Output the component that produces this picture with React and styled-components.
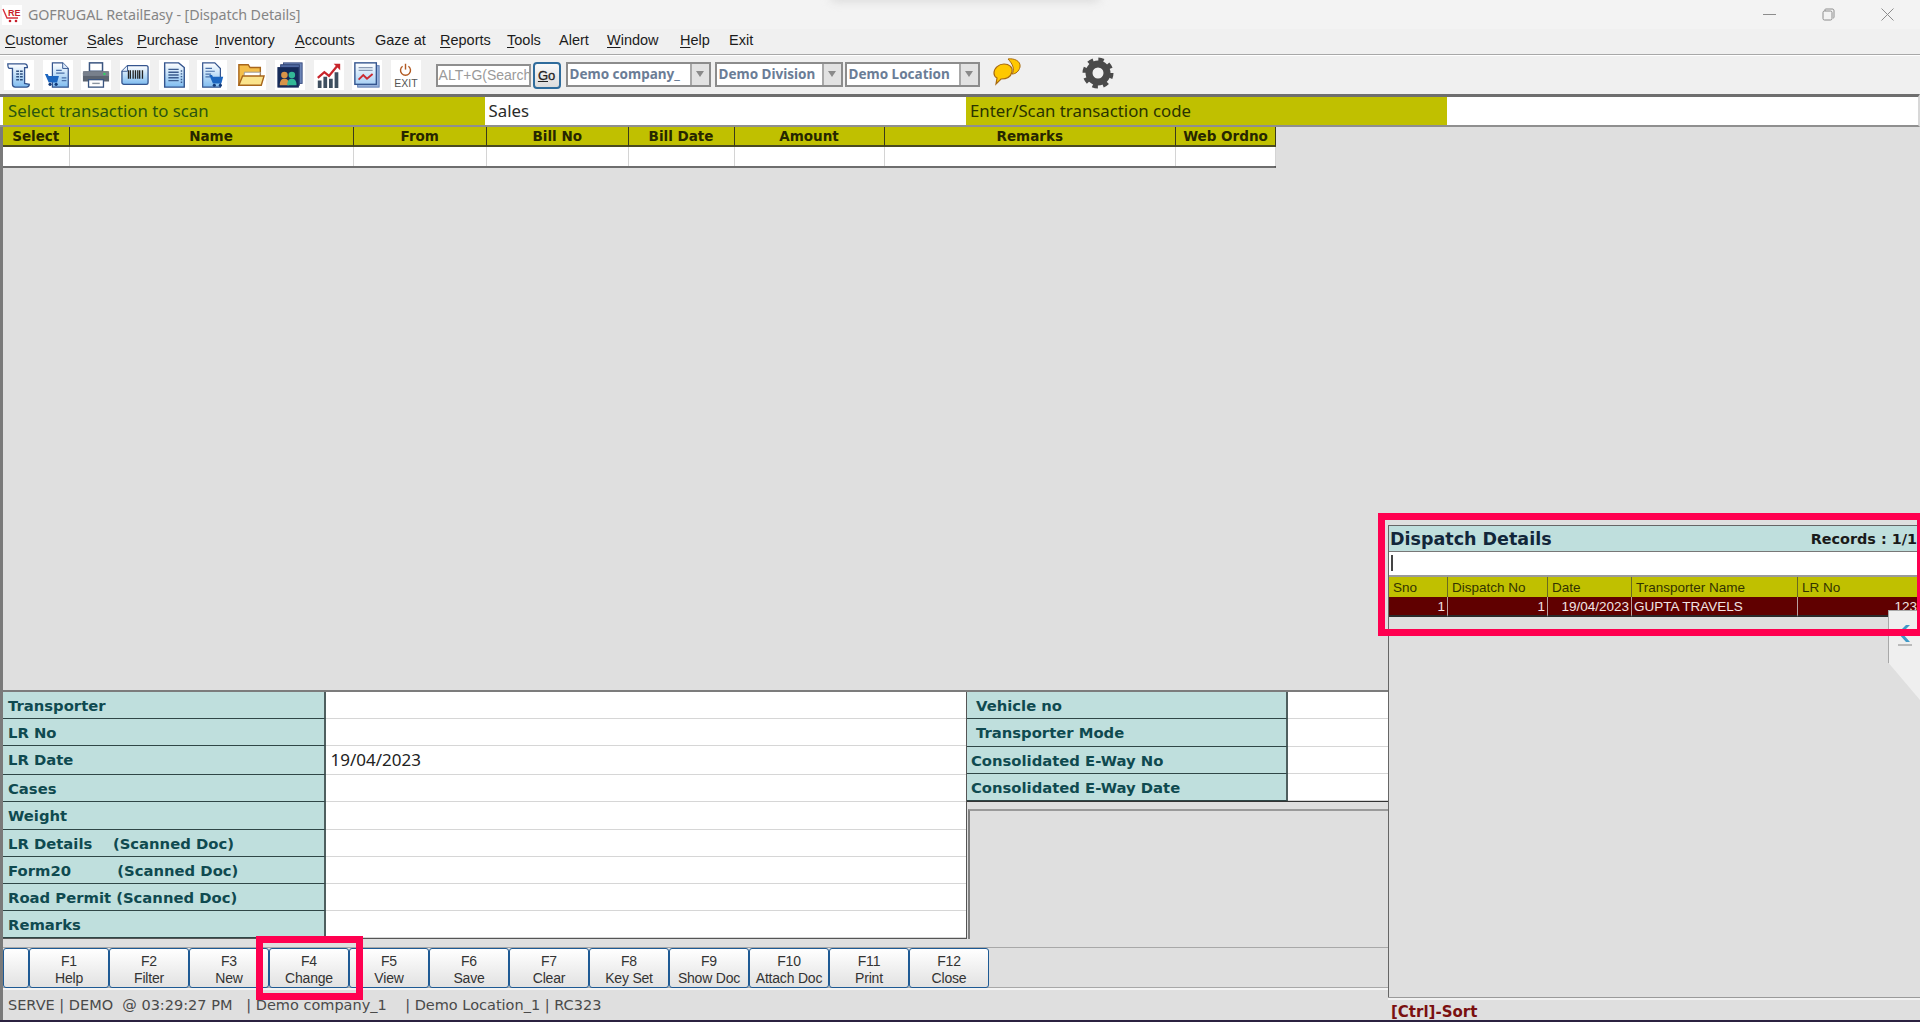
import React from "react";
import styled, { createGlobalStyle } from "styled-components";

const Global = createGlobalStyle`
  html, body { margin: 0; padding: 0; background: #dfdfdf; overflow: hidden; }
  * { box-sizing: border-box; }
`;
const SANS = `"Liberation Sans", Arial, sans-serif`;
const VERD = `"DejaVu Sans", Verdana, sans-serif`;
const TAHOMA = `"Noto Sans", "Open Sans", sans-serif`;
const OLIVE = "#c0c000";
const TEAL = "#bfdfdd";

const Page = styled.div`
  position: relative; width: 1920px; height: 1022px; overflow: hidden;
  display: flex; flex-direction: column; background: #dfdfdf; font-family: ${SANS};
`;
const TitleBar = styled.div`
  height: 29px; flex: none; background: #f3f3f3; display: flex; align-items: center; padding-left: 2px;
`;
const LogoBox = styled.div`
  width: 20px; height: 20px; background: #fff; display: flex; align-items: center; justify-content: center; margin-right: 6px;
`;
const TitleText = styled.span`
  font: 14.3px ${TAHOMA}; color: #858585; flex: 1; letter-spacing: -0.1px;
`;
const WinButtons = styled.div`
  display: flex; gap: 46px; padding-right: 26px; align-items: center;
`;
const Shadow = styled.div`
  position: absolute; left: 830px; top: -8px; width: 270px; height: 10px; background: #dcdcdc; filter: blur(4px); border-radius: 8px;
`;
const MenuBar = styled.div`
  height: 26px; flex: none; background: #f0f0f0; display: flex; align-items: center; gap: 17px; padding: 0 0 3px 5px;
  border-bottom: 1px solid #a8a8a8; box-shadow: 0 1px 0 #fff; position: relative;
  font: 14.5px ${SANS}; color: #1c1c1c;
`;
const MenuItem = styled.span`
  width: ${p => p.$w}px; flex: none; white-space: nowrap;
  u { text-decoration-thickness: 1px; text-underline-offset: 2px; }
`;
const Toolbar = styled.div`
  height: 38px; flex: none; background: #f0f0f0; display: flex; align-items: center; padding: 0 0 0 4px; margin-top: 1px;
`;
const Tile = styled.div`
  width: 30px; height: 30px; background: #fff; margin-right: 8.7px; flex: none; position: relative;
  display: flex; flex-direction: column; align-items: center; justify-content: center;
`;
const ExitLabel = styled.span`
  font: 10.5px ${SANS}; color: #555; line-height: 10px;
`;
const SearchInput = styled.div`
  width: 95px; height: 23px; flex: none; margin-left: 6px; background: #fff; border: 2px solid #8e8e8e; border-right-color: #999;
  font: 14px/19px ${SANS}; color: #9a9a9a; overflow: hidden; white-space: nowrap; padding-left: 1px;
`;
const GoButton = styled.div`
  width: 28px; height: 27px; flex: none; margin-left: 2px; border: 2px solid #2f6c9c; border-radius: 4px;
  background: linear-gradient(#fafafa, #dcdcdc); text-align: center; font: 13px/23px ${SANS}; color: #222;
  -webkit-text-stroke: 0.3px #222;
`;
const Combo = styled.div`
  width: ${p => p.$w}px; height: 25px; flex: none; margin-left: ${p => p.$ml}px; margin-top: -2px; background: #fff; border: 2px solid #8c8c8c;
  display: flex; overflow: hidden;
`;
const ComboText = styled.span`
  flex: 1; min-width: 0; white-space: nowrap; padding-left: 2px; font: bold 13.5px/21px ${TAHOMA}; color: #6b7d96;
`;
const ComboArrow = styled.span`
  width: 19px; flex: none; background: #e2e2e2; border-left: 2px solid #a8a8a8; display: flex; align-items: center; justify-content: center;
  &::after { content: ""; border: 4px solid transparent; border-top: 6px solid #8a8a8a; border-bottom: 0; }
`;
const ChatWrap = styled.div`
  width: 32px; height: 28px; margin-left: 12px; margin-top: -6px; flex: none;
`;
const GearWrap = styled.div`
  width: 32px; height: 32px; margin-left: 58px; margin-top: -4px; flex: none;
`;
const ScanRow = styled.div`
  height: 33px; flex: none; display: grid; grid-template-columns: 481.5px 481.5px 481px 1fr;
  border-top: 3px solid #6e6e6e; border-bottom: 2px solid #8f8f8f; border-right: 2px solid #d8d8d8; padding-left: 3px;
  background: #fff;
`;
const ScanLabel = styled.div`
  background: ${OLIVE}; font: 16.8px/27px ${TAHOMA}; color: ${p => p.$c}; padding-left: ${p => p.$pl}px; white-space: nowrap;
`;
const ScanValue = styled.div`
  background: #fff; font: 16.8px/27px ${TAHOMA}; color: #2a2a2a; padding-left: 4px;
`;
const Columns = styled.div`
  flex: 1; min-height: 0; display: flex;
`;
const LeftCol = styled.div`
  width: 1388px; flex: none; display: flex; flex-direction: column; border-left: 3px solid #7a7a7a;
`;
const Grid = styled.div`
  width: 1273px; flex: none; display: grid; grid-template-columns: 66.5px 284px 133.5px 141.5px 106px 150px 291.5px 100px; border-right: 2px solid #555; border-bottom: 2px solid #6e6e6e;
`;
const GridHead = styled.div`
  height: 20px; background: ${OLIVE}; border-right: 1px solid #3a3a1a; border-bottom: 2px solid #4a4a20;
  text-align: center; font: bold 13.5px/18px ${VERD}; color: #262600; white-space: nowrap; overflow: hidden;
  &:last-of-type { border-right: 0; }
`;
const GridCell = styled.div`
  height: 19px; background: #fff; border-right: 1px solid #d4d4d4;
`;
const Filler = styled.div`
  flex: 1;
`;
const FormArea = styled.div`
  height: 249px; flex: none; display: flex; border-top: 2px solid #7c7c7c;
`;
const MainForm = styled.div`
  width: 964px; flex: none; display: grid; grid-template-columns: 322.5px 1fr; grid-template-rows: repeat(9, 1fr);
  border-bottom: 1px solid #555; border-right: 1px solid #555;
`;
const FormLabel = styled.div`
  background: ${TEAL}; border-right: 2px solid #4f5f5f; border-bottom: 1.5px solid #2f4646; padding-left: ${p => p.$pl ?? 5}px;
  font: bold 14.8px/28px ${VERD}; color: #0f4a50; white-space: pre; overflow: hidden;
`;
const FormValue = styled.div`
  background: #fff; border-bottom: 1.5px solid #d6d6d6; padding-left: 5px; font: 17px/28px ${TAHOMA}; color: #222;
`;
const SideArea = styled.div`
  flex: 1; display: flex; flex-direction: column; min-width: 0;
`;
const SideForm = styled.div`
  height: 110px; flex: none; display: grid; grid-template-columns: 320.5px 1fr; grid-template-rows: repeat(4, 1fr); border-bottom: 1px solid #333;
`;
const SidePanel = styled.div`
  flex: 1; margin-top: 7px; border-top: 2px solid #9a9a9a; border-left: 2px solid #808080; margin-left: 1px; background: #dfdfdf;
`;
const FnBar = styled.div`
  height: 41px; flex: none; margin-top: 8px; display: flex; border-top: 1px solid #a8a8a8; border-bottom: 1px solid #a8a8a8; box-shadow: 0 2px 0 #f4f4f4;
`;
const FnKey = styled.div`
  width: ${p => p.$w || 80}px; flex: none; height: 40px; border: 1px solid #1e5a94; border-radius: 3px;
  background: linear-gradient(#ffffff, #e2e2e2); text-align: center; font: 14px/16.5px ${SANS}; letter-spacing: -0.2px; color: #333; padding-top: 4px; white-space: nowrap;
`;
const StatusBar = styled.div`
  height: 29px; flex: none; margin-top: 3px; display: flex; align-items: center; padding: 0 0 1px 5px; font: 14.5px ${VERD}; color: #4a4a4a; white-space: pre;
`;
const BottomEdge = styled.div`
  height: 2px; flex: none; background: #2b2140;
`;
const RightCol = styled.div`
  flex: 1; min-width: 0; padding-top: 398px; display: flex; flex-direction: column; overflow: hidden;
`;
const DispatchPanel = styled.div`
  flex: 1; display: flex; flex-direction: column; border-left: 1px solid #666;
`;
const DispatchTitle = styled.div`
  height: 27px; flex: none; background: ${TEAL}; border-top: 1px solid #666; border-bottom: 1px solid #777; display: flex; align-items: center; justify-content: space-between; padding-left: 1px;
`;
const DispatchName = styled.span`
  font: bold 17.5px ${VERD}; color: #12263a; white-space: nowrap;
`;
const Records = styled.span`
  font: bold 14.4px ${VERD}; color: #1a1a1a; white-space: nowrap; margin-right: 3px;
`;
const DispatchSearch = styled.div`
  height: 25px; flex: none; background: #fff; border-bottom: 2px solid #9a9a9a; padding: 3px 0 0 2px;
  &::before { content: ""; display: block; width: 1.5px; height: 16px; background: #444; }
`;
const DGrid = styled.div`
  display: grid; flex: none; grid-template-columns: 59px 100px 84px 166px 1fr; overflow: hidden;
`;
const DHead = styled.div`
  height: 20px; background: ${OLIVE}; border-right: 1px solid #6a6a20; padding-left: 4px; font: 13.5px/22px ${SANS}; color: #333300; white-space: nowrap;
`;
const DCell = styled.div`
  height: 20px; background: #600000; border-right: 1px solid #b8a0a0; border-bottom: 2px solid #2a2a2a; color: #f2e4e4; padding: 0 2px; font: 13.5px/19px ${SANS};
  text-align: ${p => p.$r ? "right" : "left"}; white-space: nowrap;
`;
const CtrlSort = styled.div`
  height: 23px; flex: none; border-top: 1px solid #9a9a9a; box-shadow: inset 0 2px 0 #f2f2f2; padding: 5px 0 0 3px; font: bold 15px/18px ${VERD}; color: #7a1010;
`;
const PinkBox = styled.div`
  position: absolute; border: 7px solid #ff0050; pointer-events: none;
  left: ${p => p.$l}px; top: ${p => p.$t}px; width: ${p => p.$w}px; height: ${p => p.$h}px;
`;
const FlyTab = styled.div`
  position: absolute; left: 1888px; top: 610px; width: 32px; height: 90px; background: #efefef;
  clip-path: polygon(0 0, 100% 0, 100% 100%, 0 58%);
  border-left: 1px solid #a8a8a8; border-top: 1px solid #a8a8a8;
`;
const Chevron = styled.svg`
  display: block; margin: 12px 0 0 9px;
`;

const S = ({ children, w = 28, h = 28, vb = "0 0 30 30" }) => (
  <svg width={w} height={h} viewBox={vb} aria-hidden="true">{children}</svg>
);
const Grad = ({ id, a = "#ffffff", b = "#7fbcf0" }) => (
  <defs><linearGradient id={id} x1="0" y1="0" x2="0" y2="1"><stop offset="0" stopColor={a} /><stop offset="1" stopColor={b} /></linearGradient></defs>
);
const Cart = ({ x = 0, y = 0 }) => (
  <g transform={`translate(${x} ${y})`}>
    <path d="M0 0h3l1 2h11l-2 7H4z" fill="#1c66c0" />
    <circle cx="5.5" cy="11" r="1.7" fill="#123a7a" /><circle cx="12" cy="11" r="1.7" fill="#123a7a" />
  </g>
);
const I = {
  Ledger: () => (<S><Grad id="g1" /><path d="M3 3h18c2 0 3 2 3 4h-3v17l5 1c0 2-1 3-3 3H11c-2 0-3-1-3-3V8H5C3 8 3 5 3 3z" fill="url(#g1)" stroke="#34558f" strokeWidth="1.4" /><path d="M12 11h7M12 14h7M12 17h7M12 20h7" stroke="#30507f" strokeWidth="1.6" strokeDasharray="3 1" /></S>),
  DocCart: () => (<S><Grad id="g2" /><path d="M9 2h11l6 6v20H9z" fill="url(#g2)" stroke="#34558f" strokeWidth="1.3" /><path d="M20 2v6h6" fill="#dbeafa" stroke="#34558f" /><path d="M13 10h6M13 13h9M19 18h5M19 21h5" stroke="#4a70a8" strokeWidth="1.3" /><Cart x="1" y="14" /></S>),
  Printer: () => (<S><rect x="8" y="2" width="14" height="9" fill="#fff" stroke="#3a5580" strokeWidth="1.6" /><path d="M3 11h24c1 0 2 1 2 2v9H1v-9c0-1 1-2 2-2z" fill="#5c6470" /><rect x="1" y="11" width="28" height="5" fill="#78808c" /><circle cx="24" cy="14" r="1.3" fill="#30d060" /><rect x="7" y="20" width="16" height="8" fill="#fff" stroke="#3a5580" strokeWidth="1.4" /><path d="M11 24h8" stroke="#8a94a0" strokeWidth="1.5" /></S>),
  Barcode: () => (<S><Grad id="g4" /><path d="M7 5h20c1 0 2 1 2 2v16c0 1-1 2-2 2H3c-1 0-2-1-2-2V11z" fill="url(#g4)" stroke="#34558f" strokeWidth="1.4" /><path d="M8 10v9M10 10v9M13 10v9M15.5 10v9M18 10v9M20 10v9M23 10v9" stroke="#222" strokeWidth="1.4" /><path d="M7 5v6H1" fill="#e8f2fc" stroke="#34558f" strokeWidth="1" /></S>),
  Doc: () => (<S><Grad id="g5" /><path d="M5 2h15l6 5v21H5z" fill="url(#g5)" stroke="#34558f" strokeWidth="1.5" /><path d="M9 9h11M9 12h11M9 15h11M9 18h11M9 21h11" stroke="#3d5d8f" strokeWidth="1.5" /><path d="M23 10v14" stroke="#3d5d8f" strokeWidth="1.6" strokeDasharray="1.5 1.5" /></S>),
  DocCart2: () => (<S><Grad id="g6" /><path d="M5 2h13l6 6v20H5z" fill="url(#g6)" stroke="#34558f" strokeWidth="1.3" /><path d="M8 8h7M8 11h10M8 14h6M8 17h5" stroke="#4a70a8" strokeWidth="1.3" /><Cart x="12" y="15" /></S>),
  Folder: () => (<S><path d="M2 4h10l2 3h11v19H2z" fill="#f4be4a" stroke="#a8661c" strokeWidth="1.5" /><path d="M8 12h17l-1 8H7z" fill="#fff" stroke="#9a9a9a" strokeWidth="1" /><path d="M6 16h23l-3 10H2z" fill="#fbe48c" stroke="#a8661c" strokeWidth="1.5" /></S>),
  People: () => (<S><rect x="8" y="2" width="20" height="22" fill="#6d86b8" stroke="#3a4d80" /><rect x="5" y="4" width="20" height="22" fill="#4f69a2" stroke="#2d4070" /><rect x="2" y="7" width="22" height="21" fill="#142a58" stroke="#1e3060" /><circle cx="9" cy="15" r="3.5" fill="#d89448" /><path d="M4 26c0-5 2-7 5-7s5 2 5 7z" fill="#d89448" /><circle cx="17" cy="15" r="3.5" fill="#33b896" /><path d="M12 26c0-5 2-7 5-7s5 2 5 7z" fill="#33b896" /></S>),
  Chart: () => (<S><path d="M3 21h4v8H3zM9 17h4v12H9zM15 19h4v10h-4zM21 12h4v17h-4z" fill="#3e4f60" /><path d="M3 18l7-6 5 4 9-11" fill="none" stroke="#c8252c" strokeWidth="2.4" /><path d="M20 3h7v7z" fill="#c8252c" /></S>),
  Report: () => (<S><rect x="5" y="5" width="23" height="23" fill="#9ab4dc" stroke="#5c7cb4" /><Grad id="g10" a="#ffffff" b="#a8d0f4" /><rect x="2" y="2" width="23" height="23" fill="url(#g10)" stroke="#34558f" strokeWidth="1.5" /><path d="M6 7h15M6 10h15" stroke="#8a9ab4" strokeWidth="1.3" /><path d="M6 20l5-5 4 4 6-5" fill="none" stroke="#cc2a30" strokeWidth="2" /></S>),
  Power: () => (<svg width="15" height="16" viewBox="0 0 18 18" aria-hidden="true"><path d="M5.5 4.5a6 6 0 1 0 7 0" fill="none" stroke="#b25a22" strokeWidth="1.7" /><path d="M9 1.5v7" stroke="#b25a22" strokeWidth="1.7" /></svg>),
};
const Chat = () => (
  <svg width="32" height="28" viewBox="0 0 32 28" aria-hidden="true">
    <path d="M16 1c6-1 13 2 12 8-1 4-4 7-8 7 3-4 1-10-4-15z" fill="#ffc800" stroke="#a86a10" strokeWidth="1" />
    <path d="M2 15c0-5 5-9 10-9s9 3 8 8c-1 4-5 7-11 7l-5 5 1-6c-2-1-3-3-3-5z" fill="#ffc800" stroke="#a86a10" strokeWidth="1.2" />
  </svg>
);
const Gear = () => (
  <svg width="32" height="32" viewBox="0 0 32 32" aria-hidden="true">
    <circle cx="16" cy="16" r="9" fill="none" stroke="#4a4a4a" strokeWidth="7" />
    <circle cx="16" cy="16" r="13" fill="none" stroke="#4a4a4a" strokeWidth="5" strokeDasharray="5.2 5" />
    <circle cx="16" cy="16" r="5" fill="#f0f0f0" />
  </svg>
);
const Logo = () => (
  <svg width="20" height="20" viewBox="0 0 20 20" aria-hidden="true">
    <text x="6" y="11" fontFamily={SANS} fontSize="9" fontWeight="bold" fill="#c81e2a">RE</text>
    <path d="M1 4l4 9h11" fill="none" stroke="#d8323c" strokeWidth="1.4" />
    <circle cx="8" cy="16" r="1.3" fill="#c81e2a" /><circle cx="14" cy="16" r="1.3" fill="#c81e2a" />
  </svg>
);

const menus = [
  ["C", "ustomer", 65], ["S", "ales", 33], ["P", "urchase", 61], ["I", "nventory", 63], ["A", "ccounts", 63],
  ["", "Gaze at", 48], ["R", "eports", 50], ["T", "ools", 35], ["", "Alert", 31], ["W", "indow", 56], ["H", "elp", 32], ["", "Exit", 24],
];
const toolIcons = [I.Ledger, I.DocCart, I.Printer, I.Barcode, I.Doc, I.DocCart2, I.Folder, I.People, I.Chart, I.Report];
const heads = ["Select", "Name", "From", "Bill No", "Bill Date", "Amount", "Remarks", "Web Ordno"];
const mainRows = [
  ["Transporter", ""], ["LR No", ""], ["LR Date", "19/04/2023"], ["Cases", ""], ["Weight", ""],
  ["LR Details    (Scanned Doc)", ""], ["Form20         (Scanned Doc)", ""], ["Road Permit (Scanned Doc)", ""], ["Remarks", ""],
];
const sideRows = [["Vehicle no", 9], ["Transporter Mode", 9], ["Consolidated E-Way No", 4], ["Consolidated E-Way Date", 4]];
const keys = [["F1", "Help"], ["F2", "Filter"], ["F3", "New"], ["F4", "Change"], ["F5", "View"], ["F6", "Save"], ["F7", "Clear"], ["F8", "Key Set"], ["F9", "Show Doc"], ["F10", "Attach Doc"], ["F11", "Print"], ["F12", "Close"]];

export default function App() {
  return (
    <Page>
      <Global />
      <TitleBar>
        <LogoBox><Logo /></LogoBox>
        <TitleText>GOFRUGAL RetailEasy - [Dispatch Details]</TitleText>
        <WinButtons>
          <svg width="13" height="13" viewBox="0 0 13 13" aria-hidden="true"><path d="M0 6.5h13" stroke="#8c8c8c" /></svg>
          <svg width="13" height="13" viewBox="0 0 13 13" aria-hidden="true"><rect x="1" y="3" width="9" height="9" rx="1.5" fill="none" stroke="#8c8c8c" /><path d="M3 3V1.5C3 1 3.5 1 4 1h6c1.5 0 2 .5 2 2v6c0 .5 0 1-1 1" fill="none" stroke="#8c8c8c" /></svg>
          <svg width="13" height="13" viewBox="0 0 13 13" aria-hidden="true"><path d="M.5.5l12 12M12.5.5l-12 12" stroke="#8c8c8c" /></svg>
        </WinButtons>
      </TitleBar>
      <Shadow />
      <MenuBar>
        {menus.map(([u, rest, w]) => (
          <MenuItem key={rest} $w={w}>{u ? <u>{u}</u> : null}{rest}</MenuItem>
        ))}
      </MenuBar>
      <Toolbar>
        {toolIcons.map((Ic, i) => <Tile key={i}><Ic /></Tile>)}
        <Tile><I.Power /><ExitLabel>EXIT</ExitLabel></Tile>
        <SearchInput>ALT+G(Search</SearchInput>
        <GoButton><u>G</u>o</GoButton>
        <Combo $w={145} $ml={5}><ComboText>Demo company_</ComboText><ComboArrow /></Combo>
        <Combo $w={128} $ml={4}><ComboText>Demo Division</ComboText><ComboArrow /></Combo>
        <Combo $w={135} $ml={2}><ComboText>Demo Location</ComboText><ComboArrow /></Combo>
        <ChatWrap><Chat /></ChatWrap>
        <GearWrap><Gear /></GearWrap>
      </Toolbar>
      <ScanRow>
        <ScanLabel $c="#2a5510" $pl={5}>Select transaction to scan</ScanLabel>
        <ScanValue>Sales</ScanValue>
        <ScanLabel $c="#2a3300" $pl={4}>Enter/Scan transaction code</ScanLabel>
        <ScanValue />
      </ScanRow>
      <Columns>
        <LeftCol>
          <Grid>
            {heads.map(h => <GridHead key={h}>{h}</GridHead>)}
            {heads.map(h => <GridCell key={h} />)}
          </Grid>
          <Filler />
          <FormArea>
            <MainForm>
              {mainRows.map(([l, v]) => (
                <React.Fragment key={l}>
                  <FormLabel>{l}</FormLabel>
                  <FormValue>{v}</FormValue>
                </React.Fragment>
              ))}
            </MainForm>
            <SideArea>
              <SideForm>
                {sideRows.map(([l, pl]) => (
                  <React.Fragment key={l}>
                    <FormLabel $pl={pl}>{l}</FormLabel>
                    <FormValue />
                  </React.Fragment>
                ))}
              </SideForm>
              <SidePanel />
            </SideArea>
          </FormArea>
          <FnBar>
            <FnKey $w={26} />
            {keys.map(([k, n]) => <FnKey key={k}>{k}<br />{n}</FnKey>)}
          </FnBar>
          <StatusBar>{"SERVE | DEMO  @ 03:29:27 PM   | Demo company_1    | Demo Location_1 | RC323"}</StatusBar>
        </LeftCol>
        <RightCol>
          <DispatchPanel>
            <DispatchTitle>
              <DispatchName>Dispatch Details</DispatchName>
              <Records>Records : 1/1</Records>
            </DispatchTitle>
            <DispatchSearch />
            <DGrid>
              <DHead>Sno</DHead><DHead>Dispatch No</DHead><DHead>Date</DHead><DHead>Transporter Name</DHead><DHead>LR No</DHead>
              <DCell $r>1</DCell><DCell $r>1</DCell><DCell $r>19/04/2023</DCell><DCell>GUPTA TRAVELS</DCell><DCell $r>123</DCell>
            </DGrid>
            <Filler />
          </DispatchPanel>
          <CtrlSort>[Ctrl]-Sort</CtrlSort>
        </RightCol>
      </Columns>
      <BottomEdge />
      <FlyTab>
        <Chevron width="16" height="36" viewBox="0 0 16 36" aria-hidden="true">
          <path d="M12 2L4 10l8 9H8L0 10 8 2z" fill="#3f9ac8" />
          <path d="M0 22h14" stroke="#a8a8a8" strokeWidth="1.5" />
        </Chevron>
      </FlyTab>
      <PinkBox $l={1378} $t={513} $w={546} $h={123} />
      <PinkBox $l={256} $t={936} $w={107} $h={64} />
    </Page>
  );
}
